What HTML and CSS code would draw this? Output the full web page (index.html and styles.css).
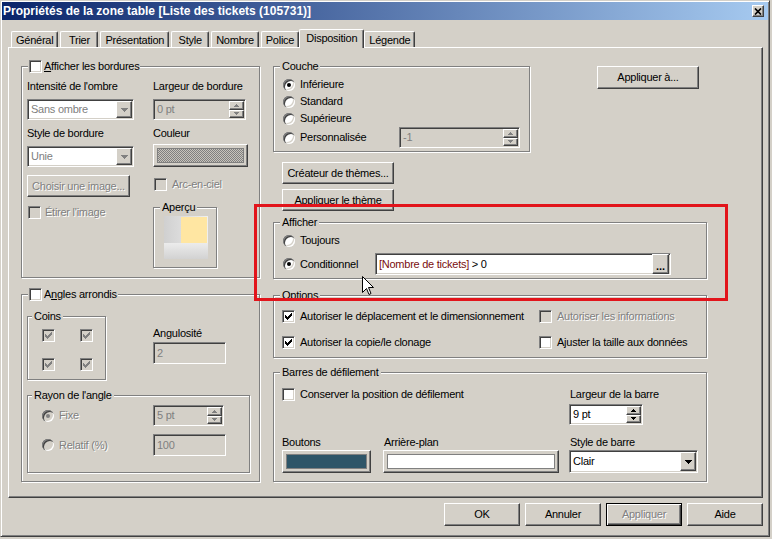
FILE: index.html
```html
<!DOCTYPE html>
<html lang="fr">
<head>
<meta charset="utf-8">
<title>Propriétés de la zone table</title>
<link rel="stylesheet" href="styles.css">
</head>
<body>
<div class="dialog">
  <div class="titlebar">
    <span class="title">Propriétés de la zone table [Liste des tickets (105731)]</span>
    <span class="close"><svg width="8" height="7" viewBox="0 0 8 7"><path d="M1 0.5L7 6.5M7 0.5L1 6.5" stroke="#000" stroke-width="1.7"/></svg></span>
  </div>

  <div class="sheet">
    <div class="tabs">
      <div class="tab">Général</div>
      <div class="tab">Trier</div>
      <div class="tab">Présentation</div>
      <div class="tab">Style</div>
      <div class="tab">Nombre</div>
      <div class="tab">Police</div>
      <div class="tab active">Disposition</div>
      <div class="tab">Légende</div>
    </div>

    <div class="panel">
      <!-- LEFT COLUMN -->
      <div class="col-left">
        <div class="group g-borders">
          <div class="legend withcb"><span class="cb"></span><span><u>A</u>fficher les bordures</span></div>
          <div class="borders-body">
            <div class="stack stack-a">
              <div class="lbl">Intensité de l'ombre</div>
              <div class="select dis sel-first"><span class="val">Sans ombre</span><span class="dd"><svg width="7" height="4" viewBox="0 0 7 4"><path d="M0 0h7v1h-1v1h-1v1h-1v1h-1v-1h-1v-1h-1v-1h-1z"/></svg></span></div>
              <div class="lbl lbl-next">Style de bordure</div>
              <div class="select dis sel-first"><span class="val">Unie</span><span class="dd"><svg width="7" height="4" viewBox="0 0 7 4"><path d="M0 0h7v1h-1v1h-1v1h-1v1h-1v-1h-1v-1h-1v-1h-1z"/></svg></span></div>
              <div class="btn dis btn-image">Choisir une image...</div>
              <div class="opt dis stretch"><span class="cb dis"></span><span>Étirer l'image</span></div>
            </div>
            <div class="stack stack-b">
              <div class="lbl">Largeur de bordure</div>
              <div class="field ro spin spin-border"><span class="txt">0 pt</span><span class="arrows"><span class="arr"><svg width="5" height="3" viewBox="0 0 5 3"><path d="M2 0h1v1h1v1h1v1h-5v-1h1v-1h1z"/></svg></span><span class="arr"><svg width="5" height="3" viewBox="0 0 5 3"><path d="M0 0h5v1h-1v1h-1v1h-1v-1h-1v-1h-1z"/></svg></span></span></div>
              <div class="lbl lbl-next">Couleur</div>
              <div class="colorbtn color-border"><span class="swatch checker"></span></div>
              <div class="opt dis rainbow"><span class="cb dis"></span><span>Arc-en-ciel</span></div>
              <div class="group apercu">
                <div class="legend">Aperçu</div>
                <div class="preview"></div>
              </div>
            </div>
          </div>
        </div>

        <div class="group g-corners">
          <div class="legend withcb"><span class="cb"></span><span>A<u>n</u>gles arrondis</span></div>
          <div class="corners-top">
            <div class="group g-coins">
              <div class="legend tight">Coins</div>
              <div class="coins-grid">
                <span class="cb dis"><svg width="7" height="7" viewBox="0 0 7 7"><path d="M0 2h1v1h1v1h1v-1h1v-1h1v-1h1v-1h1v3h-1v1h-1v1h-1v1h-1v1h-1v-1h-1v-1h-1v-1h-1z"/></svg></span>
                <span class="cb dis"><svg width="7" height="7" viewBox="0 0 7 7"><path d="M0 2h1v1h1v1h1v-1h1v-1h1v-1h1v-1h1v3h-1v1h-1v1h-1v1h-1v1h-1v-1h-1v-1h-1v-1h-1z"/></svg></span>
                <span class="cb dis"><svg width="7" height="7" viewBox="0 0 7 7"><path d="M0 2h1v1h1v1h1v-1h1v-1h1v-1h1v-1h1v3h-1v1h-1v1h-1v1h-1v1h-1v-1h-1v-1h-1v-1h-1z"/></svg></span>
                <span class="cb dis"><svg width="7" height="7" viewBox="0 0 7 7"><path d="M0 2h1v1h1v1h1v-1h1v-1h1v-1h1v-1h1v3h-1v1h-1v1h-1v1h-1v1h-1v-1h-1v-1h-1v-1h-1z"/></svg></span>
              </div>
            </div>
            <div class="angul">
              <div class="lbl">Angulosité</div>
              <div class="field ro angul-field"><span class="txt">2</span></div>
            </div>
          </div>
          <div class="group g-radius">
            <div class="legend tight">Rayon de l'angle</div>
            <div class="radius-row r1">
              <div class="opt dis radius-opt"><span class="rb dis on"></span><span>Fixe</span></div>
              <div class="field ro spin radius-spin"><span class="txt">5 pt</span><span class="arrows"><span class="arr"><svg width="5" height="3" viewBox="0 0 5 3"><path d="M2 0h1v1h1v1h1v1h-5v-1h1v-1h1z"/></svg></span><span class="arr"><svg width="5" height="3" viewBox="0 0 5 3"><path d="M0 0h5v1h-1v1h-1v1h-1v-1h-1v-1h-1z"/></svg></span></span></div>
            </div>
            <div class="radius-row r2">
              <div class="opt dis radius-opt"><span class="rb dis"></span><span>Relatif (%)</span></div>
              <div class="field ro radius-field"><span class="txt">100</span></div>
            </div>
          </div>
        </div>
      </div>

      <!-- RIGHT COLUMN -->
      <div class="col-right">
        <div class="top-row">
          <div class="group g-layer">
            <div class="legend">Couche</div>
            <div class="layer-rows">
              <div class="opt row17"><span class="rb on"></span><span>Inférieure</span></div>
              <div class="opt row17"><span class="rb"></span><span>Standard</span></div>
              <div class="opt row17"><span class="rb"></span><span>Supérieure</span></div>
              <div class="opt row21"><span class="rb"></span><span>Personnalisée</span>
                <div class="field ro spin layer-spin"><span class="txt">-1</span><span class="arrows"><span class="arr"><svg width="5" height="3" viewBox="0 0 5 3"><path d="M2 0h1v1h1v1h1v1h-5v-1h1v-1h1z"/></svg></span><span class="arr"><svg width="5" height="3" viewBox="0 0 5 3"><path d="M0 0h5v1h-1v1h-1v1h-1v-1h-1v-1h-1z"/></svg></span></span></div>
              </div>
            </div>
          </div>
          <div class="btn apply-to">Appliquer à...</div>
        </div>

        <div class="btn theme-btn theme-first">Créateur de thèmes...</div>
        <div class="btn theme-btn">Appliquer le thème</div>

        <div class="group g-show">
          <div class="legend">Afficher</div>
          <div class="opt show-r1"><span class="rb"></span><span>Toujours</span></div>
          <div class="show-r2">
            <div class="opt cond"><span class="rb on"></span><span>Conditionnel</span></div>
            <div class="field expr"><span class="txt"><span class="fldname">[Nombre de tickets]</span> &gt; 0</span><span class="btn ell">...</span></div>
          </div>
        </div>

        <div class="group g-options">
          <div class="legend">Options</div>
          <div class="options-grid">
            <div class="opt"><span class="cb"><svg width="7" height="7" viewBox="0 0 7 7"><path d="M0 2h1v1h1v1h1v-1h1v-1h1v-1h1v-1h1v3h-1v1h-1v1h-1v1h-1v1h-1v-1h-1v-1h-1v-1h-1z"/></svg></span><span>Autoriser le déplacement et le dimensionnement</span></div>
            <div class="opt dis"><span class="cb dis"></span><span>Autoriser les informations</span></div>
            <div class="opt"><span class="cb"><svg width="7" height="7" viewBox="0 0 7 7"><path d="M0 2h1v1h1v1h1v-1h1v-1h1v-1h1v-1h1v3h-1v1h-1v1h-1v1h-1v1h-1v-1h-1v-1h-1v-1h-1z"/></svg></span><span>Autoriser la copie/le clonage</span></div>
            <div class="opt"><span class="cb"></span><span>Ajuster la taille aux données</span></div>
          </div>
        </div>

        <div class="group g-scroll">
          <div class="legend">Barres de défilement</div>
          <div class="scroll-top">
            <div class="opt keep"><span class="cb"></span><span>Conserver la position de défilement</span></div>
            <div class="bar-width">
              <div class="lbl">Largeur de la barre</div>
              <div class="field spin bar-spin"><span class="txt">9 pt</span><span class="arrows"><span class="arr"><svg width="5" height="3" viewBox="0 0 5 3"><path d="M2 0h1v1h1v1h1v1h-5v-1h1v-1h1z"/></svg></span><span class="arr"><svg width="5" height="3" viewBox="0 0 5 3"><path d="M0 0h5v1h-1v1h-1v1h-1v-1h-1v-1h-1z"/></svg></span></span></div>
            </div>
          </div>
          <div class="scroll-bottom">
            <div class="cell c1"><div class="lbl">Boutons</div><div class="colorbtn cell-ctl"><span class="swatch teal"></span></div></div>
            <div class="cell c2"><div class="lbl">Arrière-plan</div><div class="colorbtn cell-ctl"><span class="swatch white"></span></div></div>
            <div class="cell c3"><div class="lbl">Style de barre</div><div class="select cell-ctl"><span class="val">Clair</span><span class="dd"><svg width="7" height="4" viewBox="0 0 7 4"><path d="M0 0h7v1h-1v1h-1v1h-1v1h-1v-1h-1v-1h-1v-1h-1z"/></svg></span></div></div>
          </div>
        </div>
      </div>
    </div>
  </div>

  <div class="footer">
    <div class="btn fbtn">OK</div>
    <div class="btn fbtn">Annuler</div>
    <div class="btn fbtn default dis">Appliquer</div>
    <div class="btn fbtn">Aide</div>
  </div>
</div>

<div class="annot"></div>
<svg class="cursor" width="12" height="19" viewBox="0 0 12 19"><path d="M0.5 0.5V16.5L4.5 12.5L7 18.5L9 17.5L6.5 11.5H11.5Z" fill="#fff" stroke="#000" stroke-width="1"/></svg>
</body>
</html>
```

FILE: styles.css
```css
* { box-sizing: border-box; }
html, body { margin: 0; padding: 0; }
body {
  position: relative;
  width: 772px;
  height: 539px;
  overflow: hidden;
  background: #D4D0C8;
  font-family: "Liberation Sans", Arial, sans-serif;
  font-size: 11px;
  line-height: 13px;
  letter-spacing: -0.25px;
  color: #000;
}

/* ---------- window frame ---------- */
.dialog {
  width: 770px;
  height: 537px;
  display: flex;
  flex-direction: column;
  padding: 1px;
  background: #D4D0C8;
  border: 1px solid;
  border-color: #D4D0C8 #404040 #404040 #D4D0C8;
  box-shadow: inset 1px 1px 0 #fff, inset -1px -1px 0 #808080;
}
.titlebar {
  flex: none;
  height: 18px;
  display: flex;
  align-items: center;
  padding: 0 4px 0 1px;
  background: linear-gradient(to right, #0A246A, #A6CAF0);
}
.title {
  flex: 1;
  color: #fff;
  font-weight: bold;
  font-size: 12px;
  letter-spacing: 0;
  line-height: 18px;
  white-space: nowrap;
}
.close {
  flex: none;
  width: 12px;
  height: 12px;
  display: flex;
  align-items: center;
  justify-content: center;
  background: #D4D0C8;
  border: 1px solid;
  border-color: #fff #404040 #404040 #fff;
  box-shadow: inset -1px -1px 0 #808080;
}
.close svg { display: block; }

/* ---------- tabs ---------- */
.sheet { margin: 0 5px 0 6px; }
.tabs {
  position: relative;
  z-index: 1;
  display: flex;
  align-items: flex-end;
  height: 27px;
  padding-left: 3px;
}
.tab {
  flex: none;
  height: 16px;
  min-width: 38px;
  padding: 2px 4px 0;
  margin-right: 2px;
  text-align: center;
  white-space: nowrap;
  border: 1px solid;
  border-bottom: 0;
  border-color: #fff #404040 #fff #fff;
  box-shadow: inset -1px 0 0 #808080;
  border-radius: 2px 2px 0 0;
}
.tab.active {
  height: 19px;
  margin: 0 0 -1px -2px;
  padding: 2px 6px 0;
  background: #D4D0C8;
}

.panel {
  height: 451px;
  display: flex;
  align-items: flex-start;
  gap: 13px;
  padding: 18px 0 0 12px;
  border: 1px solid;
  border-color: #fff #404040 #404040 #fff;
  box-shadow: inset -1px -1px 0 #808080;
}
.col-left { flex: none; width: 239px; }
.col-right { flex: none; width: 434px; }

/* ---------- generic controls ---------- */
.group {
  border: 1px solid #808080;
  box-shadow: inset 1px 1px 0 #fff, 1px 1px 0 #fff;
}
.legend {
  display: flex;
  align-items: center;
  gap: 3px;
  width: max-content;
  height: 13px;
  margin: -7px 0 0 6px;
  padding: 0 2px;
  background: #D4D0C8;
  white-space: nowrap;
}
.legend.withcb { padding: 0 1px; gap: 2px; }
.legend.tight { margin-left: 4px; }

.lbl { height: 13px; white-space: nowrap; }
.dis { color: #808080; text-shadow: 1px 1px 0 #fff; }

.opt {
  display: flex;
  align-items: center;
  gap: 5px;
  white-space: nowrap;
}

.cb {
  flex: none;
  width: 13px;
  height: 13px;
  display: flex;
  align-items: center;
  justify-content: center;
  background: #fff;
  border: 1px solid;
  border-color: #808080 #fff #fff #808080;
  box-shadow: inset 1px 1px 0 #404040, inset -1px -1px 0 #D4D0C8;
}
.cb svg { display: block; fill: #000; }
.cb.dis { background: #D4D0C8; }
.cb.dis svg { fill: #808080; }

.rb {
  position: relative;
  flex: none;
  width: 12px;
  height: 12px;
  margin-left: 1px;
  border-radius: 50%;
  background: #fff;
  box-shadow: inset 1px 1px 0 #808080, inset 2px 2px 0 #404040, inset -1px -1px 0 #fff, inset -2px -2px 0 #D4D0C8;
}
.rb.on::after {
  content: "";
  position: absolute;
  left: 4px;
  top: 4px;
  width: 4px;
  height: 4px;
  border-radius: 50%;
  background: #000;
}
.rb.dis { background: #D4D0C8; }
.rb.dis.on::after { background: #808080; }

.field {
  display: flex;
  align-items: center;
  height: 21px;
  padding-left: 3px;
  background: #fff;
  white-space: nowrap;
  border: 1px solid;
  border-color: #808080 #fff #fff #808080;
  box-shadow: inset 1px 1px 0 #404040, inset -1px -1px 0 #D4D0C8;
}
.field.ro { background: #D4D0C8; color: #808080; }
.field .txt { flex: 1; }
.arrows {
  flex: none;
  align-self: stretch;
  width: 15px;
  margin: 1px 1px 1px 0;
  display: flex;
  flex-direction: column;
}
.arr {
  flex: 1;
  display: flex;
  align-items: center;
  justify-content: center;
  background: #D4D0C8;
  border: 1px solid;
  border-color: #fff #404040 #404040 #fff;
  box-shadow: inset -1px -1px 0 #808080;
}
.arr svg, .dd svg { display: block; fill: #000; }
.field.ro .arr svg { fill: #808080; }

.select {
  display: flex;
  height: 21px;
  padding: 1px;
  background: #fff;
  border: 1px solid;
  border-color: #808080 #fff #fff #808080;
  box-shadow: inset 1px 1px 0 #404040, inset -1px -1px 0 #D4D0C8;
}
.select .val {
  flex: 1;
  display: flex;
  align-items: center;
  padding-left: 2px;
  white-space: nowrap;
}
.select.dis { text-shadow: none; }
.select .dd {
  flex: none;
  width: 16px;
  display: flex;
  align-items: center;
  justify-content: center;
  background: #D4D0C8;
  border: 1px solid;
  border-color: #fff #404040 #404040 #fff;
  box-shadow: inset -1px -1px 0 #808080;
}
.select.dis .dd svg { fill: #808080; }

.btn {
  display: flex;
  align-items: center;
  justify-content: center;
  height: 23px;
  white-space: nowrap;
  background: #D4D0C8;
  border: 1px solid;
  border-color: #fff #404040 #404040 #fff;
  box-shadow: inset -1px -1px 0 #808080;
}
.btn.default {
  border-color: #000;
  box-shadow: inset 1px 1px 0 #fff, inset -1px -1px 0 #404040, inset -2px -2px 0 #808080;
}

.colorbtn {
  display: flex;
  height: 23px;
  padding: 3px;
  background: #D4D0C8;
  border: 1px solid;
  border-color: #fff #404040 #404040 #fff;
  box-shadow: inset -1px -1px 0 #808080;
}
.swatch { flex: 1; border: 1px solid #808080; }
.swatch.checker { background: repeating-conic-gradient(#808080 0 25%, #C8C4BC 0 50%) 0 0 / 2px 2px; }
.swatch.teal { background: #2E5568; }
.swatch.white { background: #fff; }

/* ---------- left: borders ---------- */
.g-borders { height: 212px; }
.borders-body { display: flex; gap: 19px; padding: 7px 0 0 5px; }
.stack { display: flex; flex-direction: column; align-items: flex-start; }
.stack-a { width: 107px; }
.stack-b { width: 95px; }
.sel-first { width: 107px; margin-top: 6px; }
.lbl-next { margin-top: 7px; }
.btn-image { width: 103px; height: 22px; margin-top: 8px; }
.stretch { margin: 9px 0 0 1px; gap: 4px; }
.spin-border { width: 93px; margin-top: 6px; }
.color-border { width: 95px; margin-top: 4px; }
.rainbow { margin: 11px 0 0 1px; gap: 5px; }
.apercu { width: 64px; height: 61px; margin-top: 16px; }
.preview {
  width: 44px;
  height: 43px;
  margin: 2px 0 0 10px;
  background:
    linear-gradient(#FFE6A2, #FFE6A2) 17px 1px / 26px 26px no-repeat,
    linear-gradient(to bottom, #ECECEC, #D2D2D2) 0 27px / 44px 16px no-repeat,
    linear-gradient(to right, #D0D0D0, #EFEFEF) 0 0 / 44px 27px no-repeat;
}

/* ---------- left: corners ---------- */
.g-corners { height: 188px; margin-top: 16px; }
.corners-top { display: flex; padding: 15px 0 0 5px; }
.g-coins { flex: none; width: 79px; height: 64px; }
.coins-grid {
  display: grid;
  grid-template-columns: 13px 13px;
  column-gap: 25px;
  row-gap: 16px;
  padding: 6px 0 0 14px;
}
.angul { margin-left: 47px; padding-top: 11px; }
.angul-field { width: 73px; height: 22px; margin-top: 2px; }
.g-radius { width: 223px; height: 78px; margin: 15px 0 0 5px; }
.radius-row { display: flex; align-items: center; padding-left: 14px; }
.radius-row.r1 { height: 21px; margin-top: 3px; }
.radius-row.r2 { height: 22px; margin-top: 8px; }
.radius-opt { width: 111px; }
.radius-opt .rb { margin-left: 0; }
.radius-spin { width: 71px; }
.radius-field { width: 73px; height: 22px; }

/* ---------- right column ---------- */
.top-row { display: flex; align-items: flex-start; }
.g-layer { flex: none; width: 257px; height: 86px; }
.layer-rows { padding: 3px 9px 0 8px; }
.row17 { height: 17px; }
.row21 { height: 21px; }
.layer-spin { width: 121px; margin-left: auto; }
.apply-to { width: 102px; margin: 0 8px 0 auto; }

.theme-btn { width: 112px; height: 22px; margin: 5px 0 0 9px; }
.theme-btn.theme-first { margin-top: 10px; }

.g-show { height: 57px; margin-top: 11px; }
.show-r1 { height: 13px; margin: 5px 0 0 8px; }
.show-r2 { display: flex; align-items: center; height: 22px; margin: 6px 0 0 8px; }
.cond { width: 93px; }
.expr { width: 296px; height: 22px; padding-right: 1px; }
.expr .txt { white-space: pre; }
.fldname { color: #7A0E0E; }
.ell {
  flex: none;
  width: 17px;
  height: 20px;
  align-items: flex-end;
  padding-bottom: 3px;
  font-weight: bold;
  letter-spacing: 0;
  line-height: 8px;
}

.g-options { height: 63px; margin-top: 16px; }
.options-grid {
  display: grid;
  grid-template-columns: 257px auto;
  row-gap: 13px;
  padding: 8px 0 0 8px;
}
.options-grid .opt { height: 13px; }

.g-scroll { height: 110px; margin-top: 14px; }
.scroll-top { display: flex; padding: 9px 0 0 8px; }
.keep { width: 287px; height: 13px; }
.bar-width .lbl { padding-left: 1px; }
.bar-spin { width: 74px; margin-top: 3px; }
.scroll-bottom { display: flex; padding-left: 8px; margin-top: 11px; }
.cell .lbl { padding-left: 1px; }
.c1 { width: 89px; }
.c1 .lbl { padding-left: 0; }
.c2 { width: 176px; margin-left: 12px; }
.c3 { width: 129px; margin-left: 10px; }
.cell-ctl { height: 23px; margin-top: 1px; }

/* ---------- footer ---------- */
.footer {
  display: flex;
  justify-content: flex-end;
  gap: 5px;
  margin: 5px 5px 0 0;
}
.fbtn { width: 76px; height: 23px; }

/* ---------- annotation overlays ---------- */
.annot {
  position: absolute;
  left: 254px;
  top: 204px;
  width: 474px;
  height: 97px;
  border: 3px solid #E2141B;
}
.cursor {
  position: absolute;
  left: 362px;
  top: 276px;
}
```
